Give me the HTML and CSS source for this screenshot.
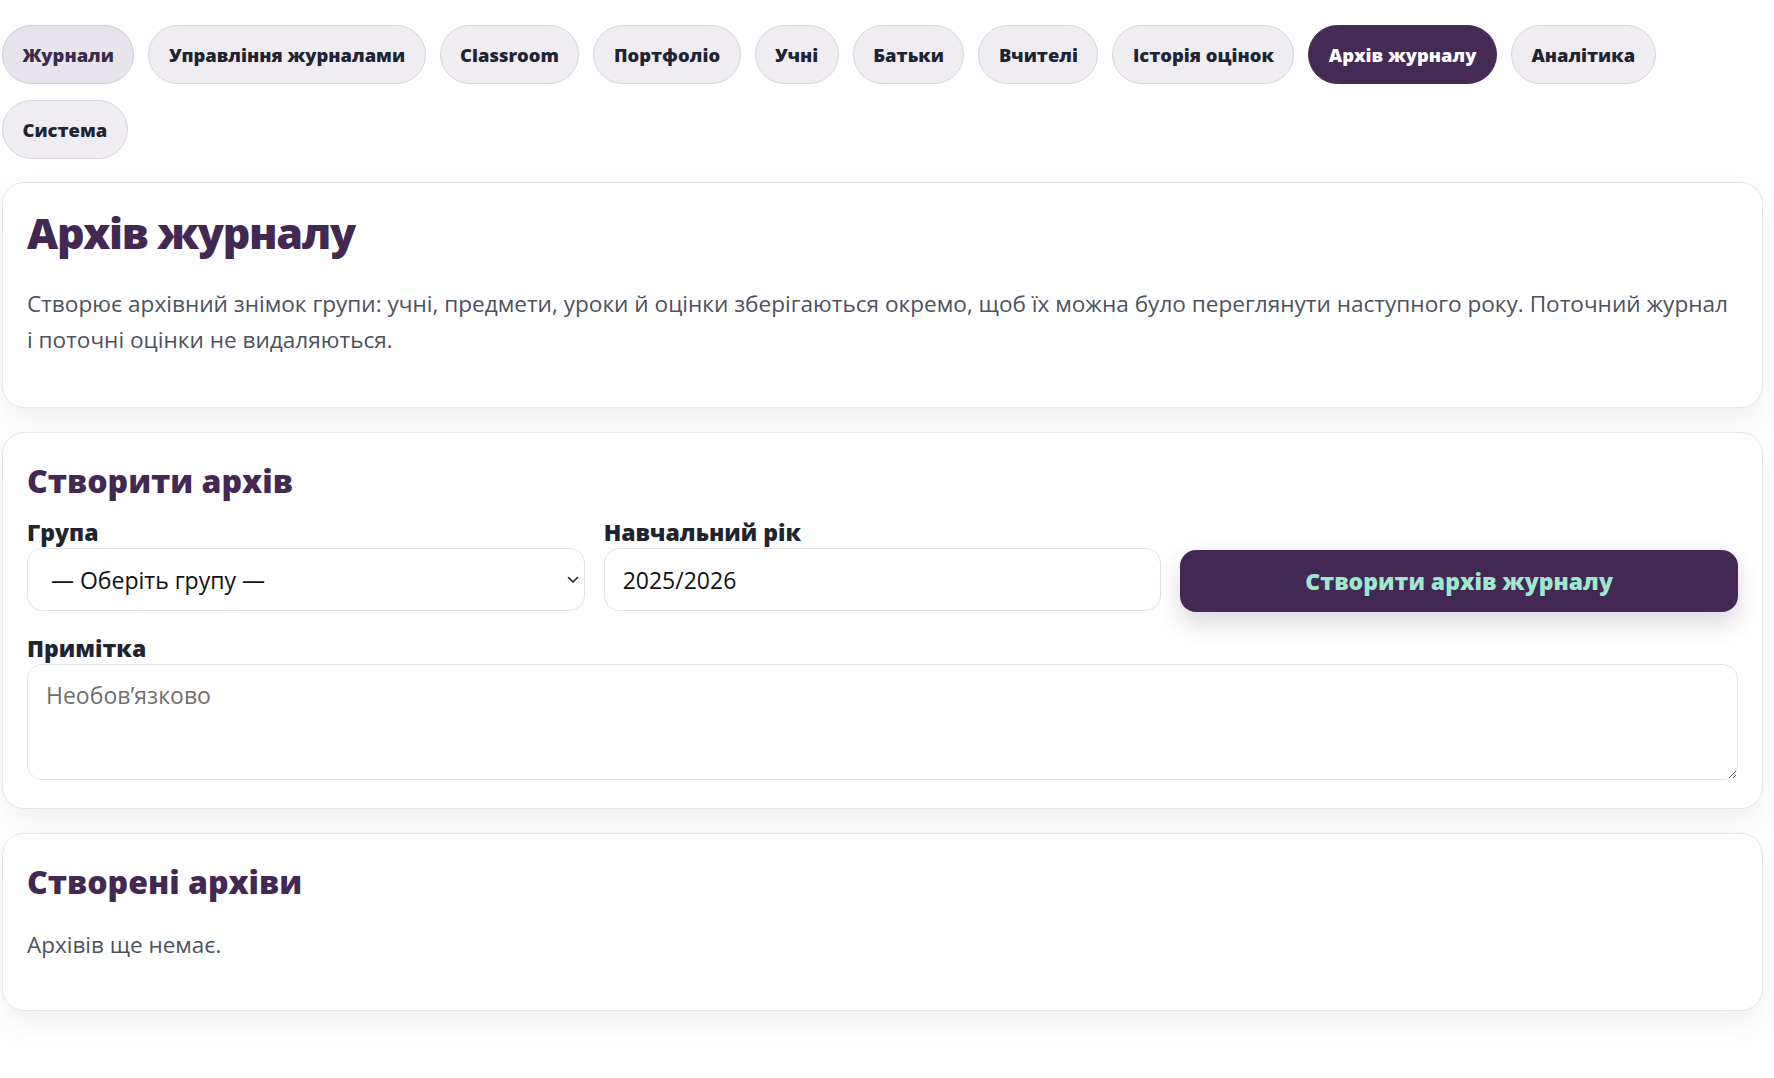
FILE: index.html
```html
<!DOCTYPE html>
<html lang="uk">
<head>
    <meta charset="UTF-8">
    <meta name="viewport" content="width=device-width, initial-scale=1.0">
    <title>Архів журналу</title>
    <link rel="stylesheet" href="styles.css">
</head>
<body>
    <nav class="tabs">
        <a class="tab tab-hover" href="#">Журнали</a>
        <a class="tab" href="#">Управління журналами</a>
        <a class="tab" href="#">Classroom</a>
        <a class="tab" href="#">Портфоліо</a>
        <a class="tab" href="#">Учні</a>
        <a class="tab" href="#">Батьки</a>
        <a class="tab" href="#">Вчителі</a>
        <a class="tab" href="#">Історія оцінок</a>
        <a class="tab selected" href="#">Архів журналу</a>
        <a class="tab" href="#">Аналітика</a>
        <a class="tab" href="#">Система</a>
    </nav>

    <main class="page">
        <section class="card">
            <h1>Архів журналу</h1>
            <p class="text lead">Створює архівний знімок групи: учні, предмети, уроки й оцінки зберігаються окремо, щоб їх можна було переглянути наступного року. Поточний журнал і поточні оцінки не видаляються.</p>
        </section>

        <section class="card">
            <h2>Створити архів</h2>
            <div class="form-row">
                <div class="form-group">
                    <label for="group">Група</label>
                    <div class="select-box">
                        <select id="group">
                            <option>— Оберіть групу —</option>
                        </select>
                        <svg class="chevron" width="12" height="8" viewBox="0 0 12 8"><path d="M1.5 1.5 6 6l4.5-4.5" fill="none" stroke="#222" stroke-width="1.6" stroke-linecap="round" stroke-linejoin="round"/></svg>
                    </div>
                </div>
                <div class="form-group">
                    <label for="year">Навчальний рік</label>
                    <input type="text" id="year" value="2025/2026">
                </div>
                <button class="button" onclick="createArchive()">Створити архів журналу</button>
            </div>
            <div class="form-group">
                <label for="note">Примітка</label>
                <textarea id="note" placeholder="Необов’язково"></textarea>
            </div>
        </section>

        <section class="card">
            <h2>Створені архіви</h2>
            <p class="text" id="archive-list">Архівів ще немає.</p>
        </section>
    </main>

    <script>
        function createArchive() {
            const group = document.getElementById('group').value;
            const year = document.getElementById('year').value;
            if (!group || !year) {
                alert('Оберіть групу та навчальний рік.');
            }
        }
    </script>
</body>
</html>
```

FILE: styles.css
```css
body {
    font-family: "Open Sans", "Noto Sans", sans-serif;
    background-color: #ffffff;
    color: #1f2430;
    margin: 0;
    padding: 25px 11px 40px 2px;
}

/* верхнє меню */
.tabs {
    display: flex;
    flex-wrap: wrap;
    gap: 16px 14px;
    margin-bottom: 23px;
}
.tab {
    display: block;
    padding: 16px 19.5px;
    line-height: 25px;
    font-size: 18.4px;
    font-weight: 800;
    color: #1e2433;
    text-decoration: none;
    background-color: #efedf2;
    border: 1px solid #d7d3dc;
    border-radius: 999px;
}
.tab-hover {
    background-color: #e7e4eb;
    border-color: #cfcad6;
    color: #3b2a4c;
}
.tab.selected {
    background-color: #452a56;
    border-color: #452a56;
    color: #ffffff;
}

/* картки */
.page {
    display: flex;
    flex-direction: column;
    gap: 24px;
}
.card {
    background-color: #ffffff;
    border: 1px solid #e6e6e8;
    border-radius: 22px;
    padding: 24px;
    box-shadow: 0 14px 32px rgba(0, 0, 0, 0.06);
}
h1 {
    margin: 0;
    font-size: 43px;
    line-height: 51px;
    letter-spacing: -1.3px;
    font-weight: 800;
    color: #432853;
}
h2 {
    margin: 5px 0 0;
    font-size: 32px;
    line-height: 1.2;
    font-weight: 800;
    color: #432853;
}
.text {
    margin: 25px 0 24px;
    font-size: 22.5px;
    line-height: 35px;
    color: #4b5260;
}
.lead {
    margin: 28px 0 25px;
    font-size: 22.6px;
    line-height: 36px;
}

/* форма */
.form-row {
    display: grid;
    grid-template-columns: 1fr 1fr 1fr;
    gap: 19px;
    align-items: end;
    margin-top: 19px;
    margin-bottom: 24px;
}
.form-group label {
    display: block;
    margin-bottom: 2px;
    font-size: 23px;
    line-height: 27px;
    font-weight: 800;
    color: #1f2430;
}
.select-box {
    position: relative;
}
.select-box .chevron {
    position: absolute;
    right: 6px;
    top: 28px;
    pointer-events: none;
}
select,
input,
textarea {
    width: 100%;
    box-sizing: border-box;
    font-family: inherit;
    font-size: 23px;
    color: #111111;
    background-color: #ffffff;
    border: 1px solid #e3e3e5;
    border-radius: 15px;
    outline: none;
}
select {
    appearance: none;
    height: 63px;
    padding: 0 40px 0 23px;
}
input {
    height: 63px;
    padding: 0 18px;
}
textarea {
    display: block;
    height: 116px;
    padding: 14px 18px;
    margin-bottom: 4px;
    resize: vertical;
}
textarea::placeholder {
    color: #6f6f6f;
}
.button {
    height: 62px;
    margin-bottom: -1px;
    font-family: inherit;
    font-size: 23px;
    font-weight: 800;
    color: #9fe8cf;
    background-color: #432853;
    border: none;
    border-radius: 16px;
    cursor: pointer;
    box-shadow: 0 12px 24px rgba(67, 40, 83, 0.18);
}
```
